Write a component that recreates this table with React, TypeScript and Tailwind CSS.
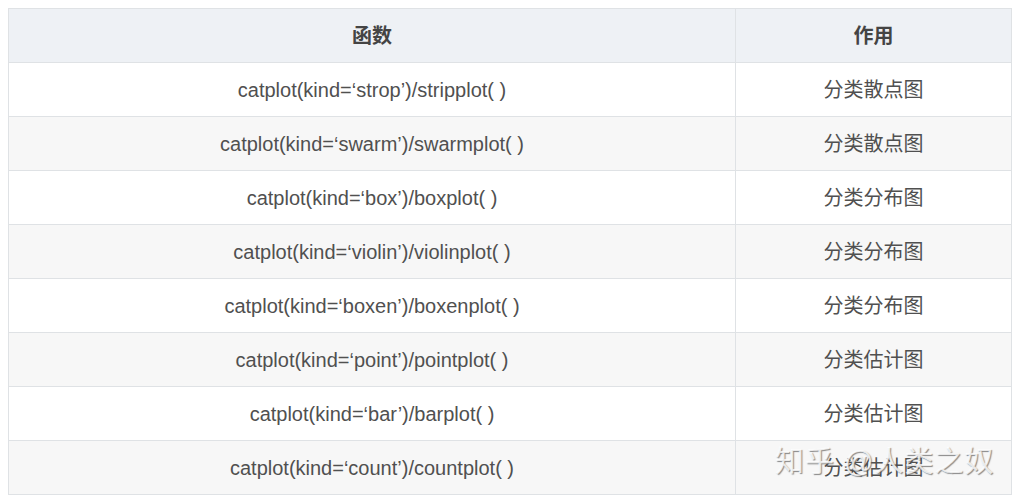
import React from "react";

const rows: [string, string][] = [
  ["catplot(kind=‘strop’)/stripplot( )", "分类散点图"],
  ["catplot(kind=‘swarm’)/swarmplot( )", "分类散点图"],
  ["catplot(kind=‘box’)/boxplot( )", "分类分布图"],
  ["catplot(kind=‘violin’)/violinplot( )", "分类分布图"],
  ["catplot(kind=‘boxen’)/boxenplot( )", "分类分布图"],
  ["catplot(kind=‘point’)/pointplot( )", "分类估计图"],
  ["catplot(kind=‘bar’)/barplot( )", "分类估计图"],
  ["catplot(kind=‘count’)/countplot( )", "分类估计图"],
];

export default function App() {
  return (
    <div
      className="relative w-[1023px] h-[503px] bg-white pt-2 pl-2 overflow-hidden"
      style={{ fontFamily: '"Liberation Sans", Arial, "Noto Sans CJK SC", sans-serif' }}
    >
      <table className="w-[1004px] border-collapse text-[20px] text-[#505050]">
        <thead>
          <tr className="h-[54px] bg-[#eef1f5]">
            <th className="w-[727px] border border-[#dfe2e5] font-bold text-[#444]">函数</th>
            <th className="border border-[#dfe2e5] font-bold text-[#444]">作用</th>
          </tr>
        </thead>
        <tbody>
          {rows.map(([fn, use], i) => (
            <tr key={i} className={`h-[54px] ${i % 2 === 1 ? "bg-[#f7f7f7]" : "bg-white"}`}>
              <td className="border border-[#dfe2e5] text-center">{fn}</td>
              <td className="border border-[#dfe2e5] text-center">{use}</td>
            </tr>
          ))}
        </tbody>
      </table>
      <div
        className="absolute left-[775px] top-[441px] text-[29px] tracking-[1px] text-white/80"
        style={{ textShadow: "1px 1px 1px rgba(90,90,90,0.7)" }}
      >
        知乎 @人类之奴
      </div>
    </div>
  );
}
